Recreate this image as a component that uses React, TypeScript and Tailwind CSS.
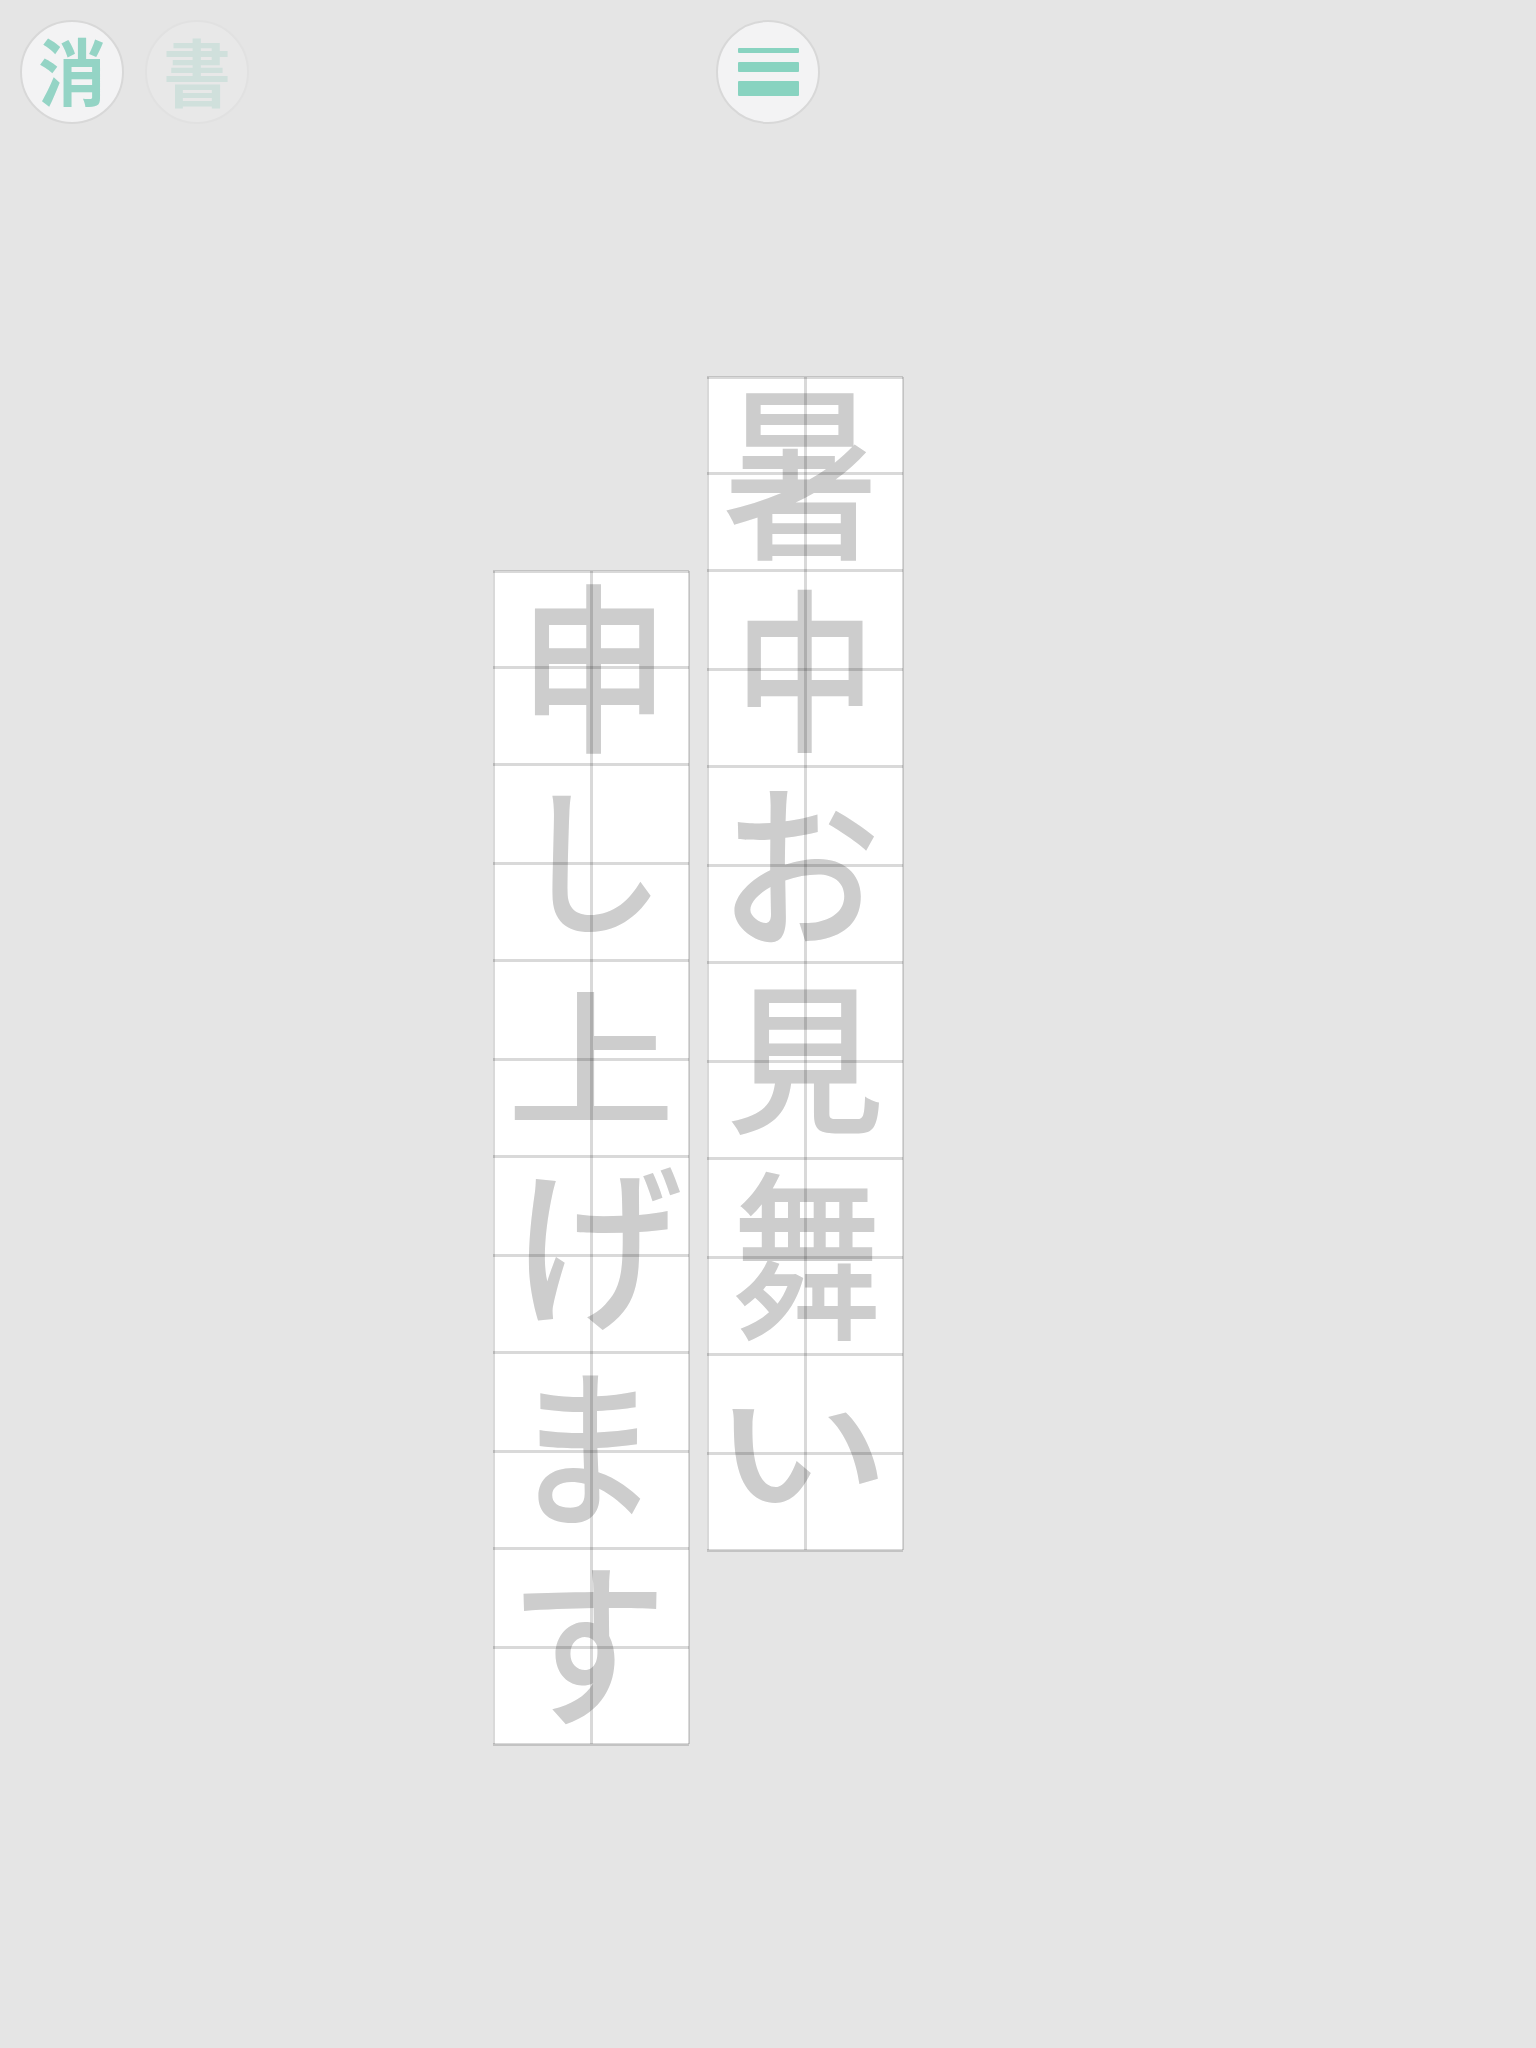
const rightColumn = [
  { char: "暑", fit: "-translate-x-[4px] -translate-y-[11px] scale-x-[0.92] scale-y-[1.09]" },
  { char: "中", fit: "-translate-y-[7px] scale-x-[0.82] scale-y-[1.02]" },
  { char: "お", fit: "-translate-x-[5px] -translate-y-[7px] scale-x-[0.94] scale-y-[1.04]" },
  { char: "見", fit: "-translate-y-[10px] scale-x-[0.92] scale-y-[0.94]" },
  { char: "舞", fit: "translate-x-[2px] -translate-y-[10px] scale-x-[0.88] scale-y-[1.05]" },
  { char: "い", fit: "-translate-x-[4px] -translate-y-[7px] scale-x-[1.04] scale-y-[0.75]" },
]

const leftColumn = [
  { char: "申", fit: "translate-x-[3px] -translate-y-[10px] scale-x-[0.87] scale-y-[1.06]" },
  { char: "し", fit: "translate-x-[1px] -translate-y-[10px] scale-x-[0.84] scale-y-[0.94]" },
  { char: "上", fit: "-translate-y-[8px] scale-x-[0.98] scale-y-[0.86]" },
  { char: "げ", fit: "translate-x-[7px] -translate-y-[16px] scale-x-[0.99] scale-y-[1.03]" },
  { char: "ま", fit: "-translate-x-[5px] -translate-y-[12px] scale-x-[0.85]" },
  { char: "す", fit: "-translate-x-[3px] -translate-y-[11px] scale-x-[0.92] scale-y-[1.04]" },
]

function RoundButton({ children, className = "" }: { children: React.ReactNode; className?: string }) {
  return (
    <div
      className={`flex h-[104px] w-[104px] shrink-0 items-center justify-center rounded-full border-2 border-[#d8d8d8] bg-[#f3f3f4] ${className}`}
    >
      {children}
    </div>
  )
}

function Cell({ char, fit, index }: { char: string; fit: string; index: number }) {
  return (
    <div
      className={`relative flex w-[196px] items-center justify-center bg-white ${
        index === 0 ? "h-[193px]" : "h-[196px]"
      }`}
    >
      <span className={`text-[172px] font-medium leading-none text-[#cdcdcd] ${fit}`}>{char}</span>

      {/* guide lines sit on top of the character */}
      <div className="absolute inset-y-0 left-0 w-[2px] bg-black/15" />
      <div className="absolute inset-y-0 right-[-1px] w-[2px] bg-black/15" />
      <div className="absolute inset-y-0 left-[97px] w-[3px] bg-black/15" />
      <div className="absolute inset-x-0 top-[-1px] h-[3px] bg-black/15" />
      <div className="absolute inset-x-0 bottom-[95px] h-[3px] bg-black/15" />
      {index === 5 && <div className="absolute inset-x-0 bottom-[-2px] h-[3px] bg-black/15" />}
    </div>
  )
}

export default function App() {
  return (
    <div
      className="h-[2048px] w-[1536px] overflow-hidden bg-[#e5e5e5]"
      style={{ fontFamily: '"Noto Sans CJK JP", "Noto Sans CJK SC", sans-serif' }}
    >
      {/* Toolbar */}
      <div className="flex pl-[20px] pt-[20px]">
        <RoundButton>
          <span className="-translate-y-[3px] scale-x-[0.89] scale-y-[0.95] text-[76px] font-bold leading-none text-[#94d4c5]">
            消
          </span>
        </RoundButton>
        <RoundButton className="ml-[21px] opacity-25">
          <span className="-translate-y-[3px] scale-x-[0.89] scale-y-[0.96] text-[76px] font-bold leading-none text-[#94d4c5]">
            書
          </span>
        </RoundButton>
        <RoundButton className="ml-[467px]">
          <div className="flex w-[61px] flex-col gap-[9px]">
            <div className="h-[5px] rounded-[1px] bg-[#88d3c0]" />
            <div className="h-[10px] rounded-[1px] bg-[#88d3c0]" />
            <div className="h-[15px] rounded-[1px] bg-[#88d3c0]" />
          </div>
        </RoundButton>
      </div>

      {/* Columns, read right to left */}
      <div className="ml-[493px] mt-[253px] flex items-start gap-[18px]">
        <div className="mt-[194px] flex flex-col">
          {leftColumn.map((c, i) => (
            <Cell key={c.char} char={c.char} fit={c.fit} index={i} />
          ))}
        </div>
        <div className="flex flex-col">
          {rightColumn.map((c, i) => (
            <Cell key={c.char} char={c.char} fit={c.fit} index={i} />
          ))}
        </div>
      </div>
    </div>
  )
}
